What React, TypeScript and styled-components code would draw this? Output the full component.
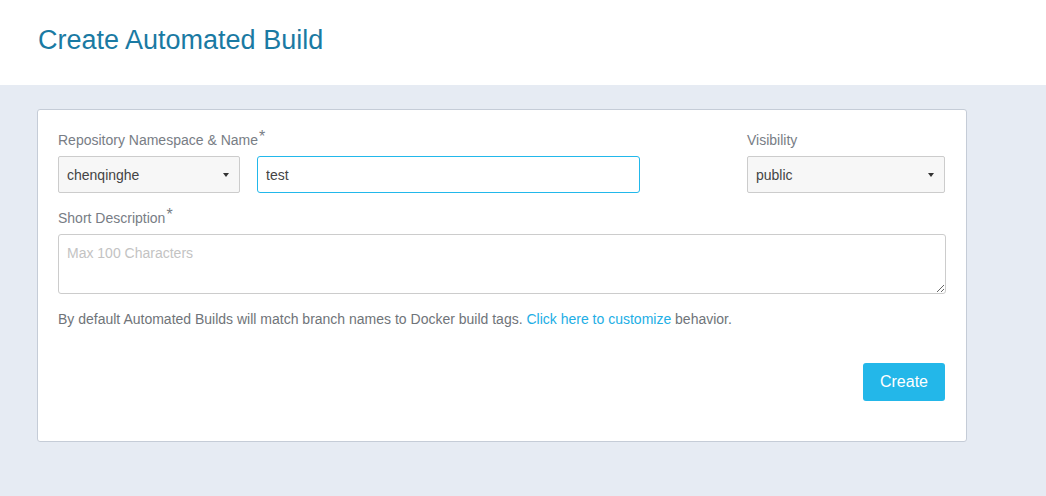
import styled, { createGlobalStyle } from 'styled-components';

const GlobalStyle = createGlobalStyle`
  html, body {
    margin: 0;
    padding: 0;
    background: #e6ebf3;
    font-family: 'Liberation Sans', Arial, sans-serif;
  }
`;

export default function App() {
  return (
    <>
      <GlobalStyle />
      <Header>
        <Title>Create Automated Build</Title>
      </Header>
      <Main>
        <Card>
          <Row>
            <Field>
              <Label>
                Repository Namespace &amp; Name<Star>*</Star>
              </Label>
              <Inline>
                <Select width={182}>
                  <span>chenqinghe</span>
                  <Caret />
                </Select>
                <TextInput defaultValue="test" />
              </Inline>
            </Field>
            <Field>
              <Label>Visibility</Label>
              <Select width={198}>
                <span>public</span>
                <Caret />
              </Select>
            </Field>
          </Row>
          <Field>
            <Label>
              Short Description<Star>*</Star>
            </Label>
            <TextArea placeholder="Max 100 Characters" />
          </Field>
          <Help>
            By default Automated Builds will match branch names to Docker build tags.{' '}
            <Link href="#">Click here to customize</Link> behavior.
          </Help>
          <Actions>
            <Button>Create</Button>
          </Actions>
        </Card>
      </Main>
    </>
  );
}

const Header = styled.header`
  background: #fff;
  height: 85px;
  padding: 0 38px;
  display: flex;
  align-items: center;
  box-sizing: border-box;
`;

const Title = styled.h1`
  margin: 0 0 5px;
  font-weight: 400;
  font-size: 27px;
  color: #1a7aa3;
`;

const Main = styled.main`
  padding: 24px 37px;
  height: 411px;
  box-sizing: border-box;
`;

const Card = styled.div`
  width: 930px;
  height: 333px;
  box-sizing: border-box;
  background: #fff;
  border: 1px solid #c5ccd7;
  border-radius: 3px;
  padding: 20px 21px 20px 20px;
  display: flex;
  flex-direction: column;
`;

const Row = styled.div`
  display: flex;
  justify-content: space-between;
  margin-bottom: 15px;
`;

const Field = styled.div`
  display: flex;
  flex-direction: column;
`;

const Label = styled.label`
  font-size: 14px;
  color: #787d85;
  height: 16px;
  line-height: 16px;
  margin-bottom: 8px;
  margin-top: 2px;
`;

const Star = styled.span`
  font-size: 16px;
  position: relative;
  top: -3px;
  margin-left: 1px;
`;

const Inline = styled.div`
  display: flex;
  gap: 17px;
`;

const Select = styled.div<{ width: number }>`
  width: ${(p) => p.width}px;
  height: 37px;
  box-sizing: border-box;
  background: #f7f7f7;
  border: 1px solid #cccccc;
  border-radius: 2px;
  padding: 0 10px 0 8px;
  display: flex;
  align-items: center;
  justify-content: space-between;
  font-size: 14px;
  color: #444;
`;

const Caret = styled.i`
  width: 0;
  height: 0;
  border-left: 3px solid transparent;
  border-right: 3px solid transparent;
  border-top: 4px solid #333;
`;

const TextInput = styled.input`
  width: 383px;
  height: 37px;
  box-sizing: border-box;
  border: 1px solid #22b8eb;
  border-radius: 3px;
  padding: 0 8px;
  font-family: inherit;
  font-size: 14px;
  color: #444;
  outline: none;
`;

const TextArea = styled.textarea`
  width: 888px;
  height: 60px;
  box-sizing: border-box;
  border: 1px solid #cccccc;
  border-radius: 3px;
  padding: 10px 8px;
  font-family: inherit;
  font-size: 14px;
  color: #444;
  &::placeholder {
    color: #c3c3c3;
  }
`;

const Help = styled.p`
  margin: 17px 0 0;
  font-size: 14px;
  color: #6f7479;
`;

const Link = styled.a`
  color: #22aee5;
  text-decoration: none;
`;

const Actions = styled.div`
  display: flex;
  justify-content: flex-end;
  margin-top: 36px;
`;

const Button = styled.button`
  width: 82px;
  height: 38px;
  border: none;
  border-radius: 3px;
  background: #23b7e9;
  color: #fff;
  font-family: inherit;
  font-size: 16px;
`;
